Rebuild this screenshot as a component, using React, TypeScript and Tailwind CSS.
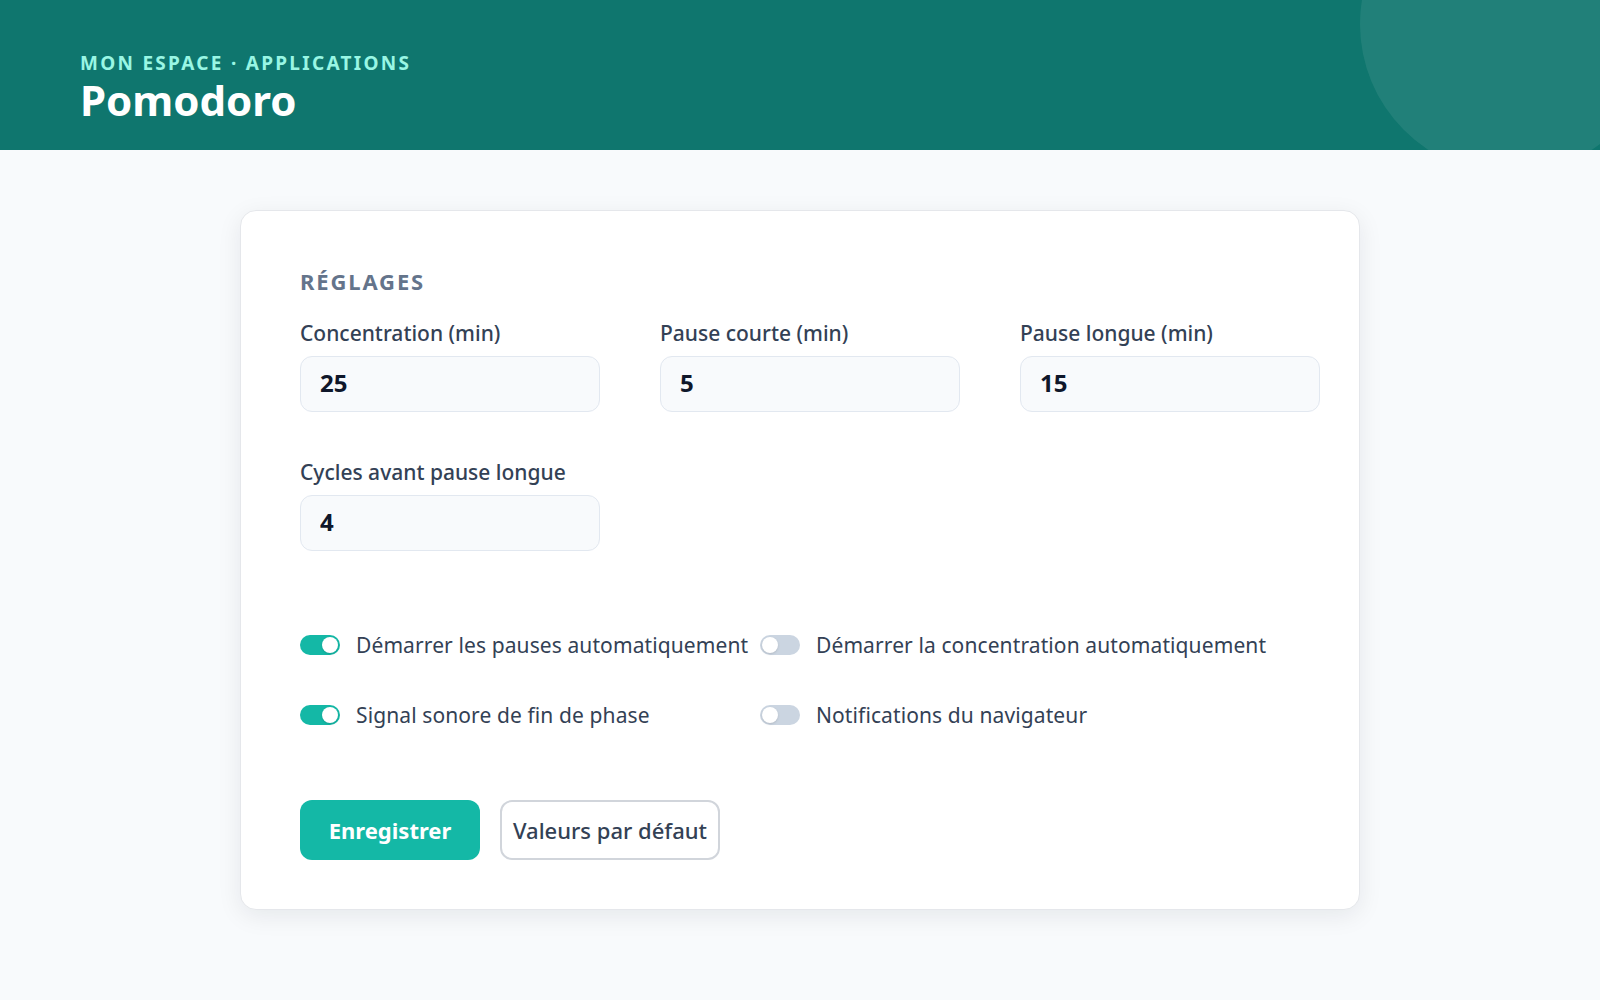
import React, { useState } from 'react';

type Field = { label: string; value: string };
type Option = { label: string; on: boolean };

const fields: Field[] = [
    { label: 'Concentration (min)', value: '25' },
    { label: 'Pause courte (min)', value: '5' },
    { label: 'Pause longue (min)', value: '15' },
    { label: 'Cycles avant pause longue', value: '4' },
];

const initialOptions: Option[] = [
    { label: 'Démarrer les pauses automatiquement', on: true },
    { label: 'Démarrer la concentration automatiquement', on: false },
    { label: 'Signal sonore de fin de phase', on: true },
    { label: 'Notifications du navigateur', on: false },
];

function Toggle({ on, onClick }: { on: boolean; onClick: () => void }) {
    return (
        <button
            onClick={onClick}
            className={`relative h-5 w-10 shrink-0 rounded-full ${on ? 'bg-[#14b8a6]' : 'bg-[#cbd5e1]'}`}
        >
            <span
                className={`absolute top-[2px] h-4 w-4 rounded-full bg-white shadow-sm ${on ? 'left-[22px]' : 'left-[2px]'}`}
            />
        </button>
    );
}

export default function App() {
    const [options, setOptions] = useState(initialOptions);

    const flip = (i: number) =>
        setOptions(options.map((o, j) => (j === i ? { ...o, on: !o.on } : o)));

    return (
        <div className="min-h-screen bg-[#f8fafc] font-['Noto_Sans',sans-serif]">
            {/* Header */}
            <header className="relative h-[150px] overflow-hidden bg-[#0f766e] px-20 pt-[52px]">
                <div className="absolute -right-[60px] -top-[126px] h-[300px] w-[300px] rounded-full bg-white/[0.08]" />
                <p className="text-[19px] font-bold leading-[22px] tracking-[0.12em] text-[#99f6e4]">
                    MON ESPACE · APPLICATIONS
                </p>
                <h1 className="mt-[4px] text-[42px] font-bold leading-[44px] text-white">Pomodoro</h1>
            </header>

            {/* Settings card */}
            <main className="px-4 pt-[60px]">
                <div className="mx-auto max-w-[1120px] rounded-2xl border border-[#e5e7eb] bg-white px-[59px] pb-[49px] pt-[53px] shadow-[0_6px_24px_rgba(15,23,42,0.08)]">
                    <h2 className="text-[22px] font-bold leading-[34px] tracking-[0.085em] text-[#64748b]">RÉGLAGES</h2>

                    <div className="mt-[21px] grid grid-cols-[repeat(3,300px)] gap-x-[60px] gap-y-[46px]">
                        {fields.map(({ label, value }) => (
                            <label key={label} className="block">
                                <span className="block text-[21px] font-medium leading-[28px] text-[#334155]">{label}</span>
                                <input
                                    defaultValue={value}
                                    className="mt-[9px] block h-14 w-full rounded-xl border border-[#e2e8f0] bg-[#f8fafc] px-[19px] pb-[3px] text-[24px] font-bold text-[#0f172a] outline-none"
                                />
                            </label>
                        ))}
                    </div>

                    {/* Toggles */}
                    <div className="mt-[80px] grid grid-cols-[460px_auto] gap-y-[42px]">
                        {options.map((o, i) => (
                            <div key={o.label} className="flex items-center gap-4">
                                <Toggle on={o.on} onClick={() => flip(i)} />
                                <span className="text-[21px] leading-[28px] tracking-[0.005em] text-[#334155]">{o.label}</span>
                            </div>
                        ))}
                    </div>

                    {/* Actions */}
                    <div className="mt-[71px] flex gap-5">
                        <button className="h-[60px] w-[180px] rounded-xl bg-[#14b8a6] text-[22px] font-bold text-white">
                            Enregistrer
                        </button>
                        <button className="h-[60px] rounded-xl border-2 border-[#d1d5db] bg-white px-[11px] text-[22px] font-medium text-[#334155]">
                            Valeurs par défaut
                        </button>
                    </div>
                </div>
            </main>
        </div>
    );
}
